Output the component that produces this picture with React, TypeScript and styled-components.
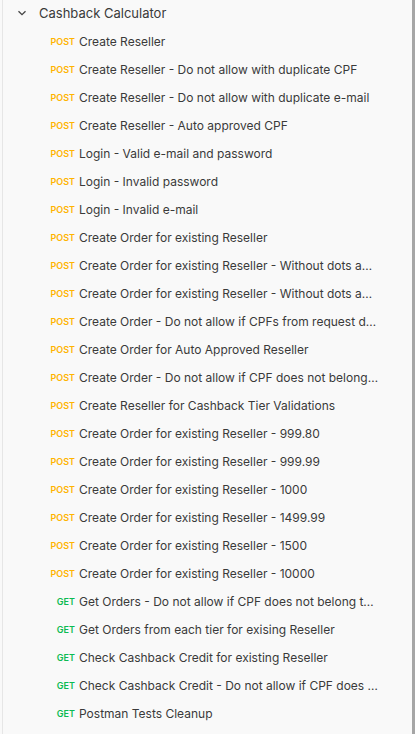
import styled, { createGlobalStyle } from "styled-components";

const GlobalStyle = createGlobalStyle`
  html, body {
    margin: 0;
    padding: 0;
    background: #f9f9f9;
  }
  body {
    font-family: Inter, "Noto Sans", sans-serif;
  }
`;

const Sidebar = styled.div`
  display: flex;
  flex-direction: column;
  width: 413px;
  height: 734px;
  box-sizing: border-box;
  margin-left: 2px;
  background: #f9f9f9;
  border-left: 1px solid #e6e6e6;
  border-right: 3px solid #a6a6a6;
  overflow: hidden;
`;

const FolderRow = styled.div`
  display: flex;
  align-items: center;
  height: 28px;
  box-sizing: border-box;
  padding-left: 14px;
  padding-bottom: 2px;
  gap: 12px;
  color: #3a3a3a;
  font-size: 13px;
`;

const Chevron = styled.svg`
  width: 10px;
  height: 10px;
  flex-shrink: 0;
`;

const RequestRow = styled.div`
  display: flex;
  align-items: center;
  height: 28px;
  box-sizing: border-box;
  padding-left: 39px;
  padding-right: 34px;
  padding-bottom: 2px;
`;

const Method = styled.span<{ $color: string }>`
  width: 37px;
  flex-shrink: 0;
  text-align: right;
  padding-right: 4px;
  box-sizing: border-box;
  font-size: 9px;
  font-weight: 600;
  color: ${(p) => p.$color};
`;

const Name = styled.span`
  flex: 1;
  min-width: 0;
  white-space: nowrap;
  overflow: hidden;
  text-overflow: ellipsis;
  font-size: 12px;
  color: #3a3a3a;
`;

const METHOD_COLORS: Record<string, string> = {
  POST: "#ffb400",
  GET: "#0cbb52",
};

const requests: [string, string][] = [
  ["POST", "Create Reseller"],
  ["POST", "Create Reseller - Do not allow with duplicate CPF"],
  ["POST", "Create Reseller - Do not allow with duplicate e-mail"],
  ["POST", "Create Reseller - Auto approved CPF"],
  ["POST", "Login - Valid e-mail and password"],
  ["POST", "Login - Invalid password"],
  ["POST", "Login - Invalid e-mail"],
  ["POST", "Create Order for existing Reseller"],
  ["POST", "Create Order for existing Reseller - Without dots and dashes on CPF"],
  ["POST", "Create Order for existing Reseller - Without dots and dashes on code"],
  ["POST", "Create Order - Do not allow if CPFs from request differs"],
  ["POST", "Create Order for Auto Approved Reseller"],
  ["POST", "Create Order - Do not allow if CPF does not belong to Reseller"],
  ["POST", "Create Reseller for Cashback Tier Validations"],
  ["POST", "Create Order for existing Reseller - 999.80"],
  ["POST", "Create Order for existing Reseller - 999.99"],
  ["POST", "Create Order for existing Reseller - 1000"],
  ["POST", "Create Order for existing Reseller - 1499.99"],
  ["POST", "Create Order for existing Reseller - 1500"],
  ["POST", "Create Order for existing Reseller - 10000"],
  ["GET", "Get Orders - Do not allow if CPF does not belong to Reseller"],
  ["GET", "Get Orders from each tier for exising Reseller"],
  ["GET", "Check Cashback Credit for existing Reseller"],
  ["GET", "Check Cashback Credit - Do not allow if CPF does not belong"],
  ["GET", "Postman Tests Cleanup"],
];

export default function App() {
  return (
    <>
      <GlobalStyle />
      <Sidebar>
        <FolderRow>
          <Chevron viewBox="0 0 10 10">
            <path d="M1.5 3.2 L5 6.7 L8.5 3.2" fill="none" stroke="#444" strokeWidth="1.3" />
          </Chevron>
          Cashback Calculator
        </FolderRow>
        {requests.map(([method, name], i) => (
          <RequestRow key={i}>
            <Method $color={METHOD_COLORS[method]}>{method}</Method>
            <Name>{name}</Name>
          </RequestRow>
        ))}
      </Sidebar>
    </>
  );
}
